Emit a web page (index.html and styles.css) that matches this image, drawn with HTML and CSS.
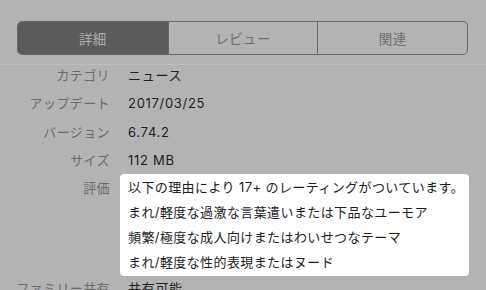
FILE: index.html
```html
<!DOCTYPE html>
<html lang="ja">
<head>
<meta charset="utf-8">
<link rel="stylesheet" href="styles.css">
</head>
<body>
<div class="page">
  <div class="header">
    <div class="segmented">
      <div class="seg seg-active">詳細</div>
      <div class="seg">レビュー</div>
      <div class="seg">関連</div>
    </div>
  </div>
  <div class="info">
    <div class="row"><div class="label">カテゴリ</div><div class="value">ニュース</div></div>
    <div class="row"><div class="label">アップデート</div><div class="value">2017/03/25</div></div>
    <div class="row"><div class="label">バージョン</div><div class="value">6.74.2</div></div>
    <div class="row"><div class="label">サイズ</div><div class="value">112 MB</div></div>
    <div class="row row-rating">
      <div class="label">評価</div>
      <div class="popup">
        <div class="pline">以下の理由により 17+ のレーティングがついています。</div>
        <div class="pline">まれ/軽度な過激な言葉遣いまたは下品なユーモア</div>
        <div class="pline">頻繁/極度な成人向けまたはわいせつなテーマ</div>
        <div class="pline">まれ/軽度な性的表現またはヌード</div>
      </div>
    </div>
    <div class="row"><div class="label">ファミリー共有</div><div class="value">共有可能</div></div>
  </div>
</div>
</body>
</html>
```

FILE: styles.css
```css
* { box-sizing: border-box; }
html, body {
  margin: 0;
  padding: 0;
  background: #b3b3b3;
  overflow: hidden;
}
body {
  font-family: "Inter", "Noto Sans CJK JP", sans-serif;
  font-size: 13px;
  letter-spacing: 0.4px;
}
.page {
  width: 486px;
  height: 290px;
}
.header {
  height: 65px;
  padding: 21px 18px 0 17px;
  border-bottom: 1px solid #bebebe;
}
.segmented {
  display: grid;
  grid-template-columns: 1fr 1fr 1fr;
  height: 34px;
  border: 1px solid #686868;
  border-radius: 5px;
  overflow: hidden;
}
.seg {
  display: flex;
  align-items: center;
  justify-content: center;
  color: #707070;
  font-size: 13.5px;
  border-left: 1px solid #686868;
}
.seg:first-child { border-left: none; }
.seg-active {
  background: #5b5b5b;
  color: #adadad;
}
.info {
  display: flex;
  flex-direction: column;
  gap: 8.33px;
}
.row {
  display: grid;
  grid-template-columns: 110px 1fr;
  column-gap: 10px;
  line-height: 20px;
  height: 20px;
}
.label {
  text-align: right;
  color: #6c6c6c;
  white-space: nowrap;
}
.value {
  padding-left: 8px;
  color: #1e1e1e;
  letter-spacing: 0.7px;
}
.row-rating {
  height: auto;
  margin-bottom: -7px;
}
.popup {
  margin-top: -4.5px;
  margin-right: 17px;
  background: #ffffff;
  border-radius: 4px;
  padding: 1.5px 0 1px 8px;
  color: #1e1e1e;
}
.pline {
  line-height: 25px;
  white-space: nowrap;
}
```
